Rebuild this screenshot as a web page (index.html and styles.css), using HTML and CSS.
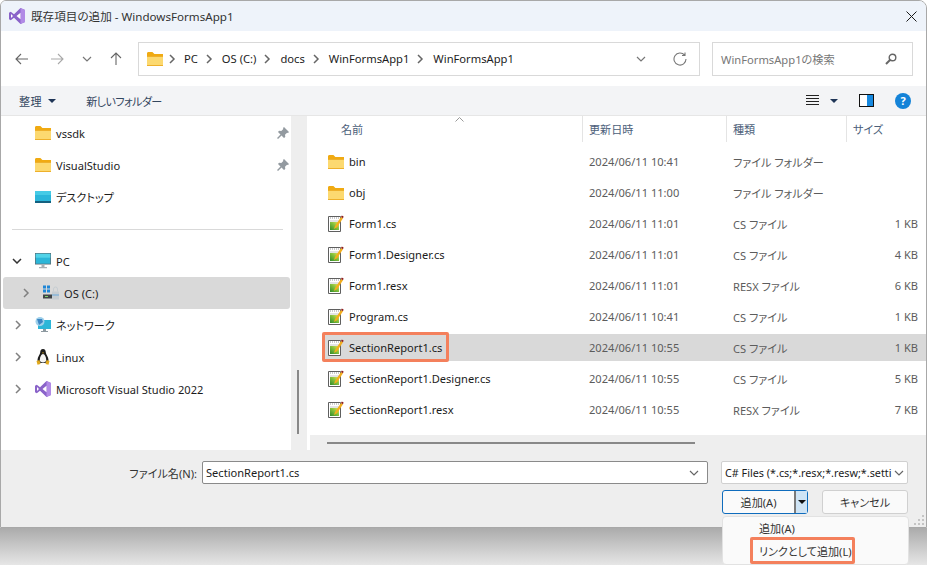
FILE: index.html
```html
<!DOCTYPE html>
<html lang="ja">

<head>
    <meta charset="UTF-8">
    <title>既存項目の追加 - WindowsFormsApp1</title>
    <link rel="stylesheet" href="styles.css">
</head>

<body>
    <!-- Shared icons -->
    <svg class="defs" width="0" height="0">
        <linearGradient id="g-cs" x1="0" y1="1" x2="1" y2="0">
            <stop offset="0" stop-color="#2f8a2a" />
            <stop offset=".55" stop-color="#86c13c" />
            <stop offset="1" stop-color="#e6e35a" />
        </linearGradient>
        <symbol id="i-folder" viewBox="0 0 16 14">
            <path d="M0 1.500C0 .7.6 0 1.400 0h4l2 2H16v3H0z" fill="#f0aa12" />
            <path d="M0 4h16v8.600c0 .8-.6 1.400-1.400 1.400H1.400C.6 14 0 13.400 0 12.600z" fill="#fcd970" />
            <path d="M0 4h16v1H0zM0 13h16v1H0z" fill="#eeb02b" />
        </symbol>
        <symbol id="i-cs" viewBox="0 0 16 17">
            <path d="M.5 1.500h12v15H.5z" fill="#fff" stroke="#5f5f5f" />
            <path d="M2 3h9" stroke="#999" stroke-dasharray="1 1" />
            <path d="M2 5h9v2H2z" fill="#e4e4e4" />
            <path d="M2 7h9v8H2z" fill="url(#g-cs)" />
            <path d="M6 14l1-3 6-9 2 1.300-6 9z" fill="#f3ae1d" />
            <path d="M13 2l.8-1.500L15.600 1.600 15 3.300z" fill="#8c1c1c" />
        </symbol>
        <symbol id="i-vs" viewBox="0 0 16 16">
            <path d="M11.500 0L16 2v12l-4.500 2L5 9.800 1.800 12.300 0 11.300V4.700l1.800-1L5 6.200z" fill="#8a63c9" />
            <path d="M11.500 0L16 2v12l-4.500 2z" fill="#b18ae6" />
            <path d="M11.500 4.700L7.500 8l4 3.300zM2 6v4l2-2z" fill="#fff" />
        </symbol>
        <symbol id="i-pc" viewBox="0 0 16 16">
            <path d="M0 0h16v11.500H0z" fill="#5b6b73" />
            <path d="M.7.700h14.600v10H.7z" fill="#2cb6d8" />
            <path d="M.7.700h14.600v4H.7z" fill="#52d3e8" />
            <path d="M6.500 11.500h3V14h-3zM4 14h8v1.200H4z" fill="#a9b1b5" />
        </symbol>
        <symbol id="i-desk" viewBox="0 0 16 12">
            <path d="M0 1c0-.6.4-1 1-1h14c.6 0 1 .4 1 1v9H0z" fill="#2bb6da" />
            <path d="M0 0h16v4H0z" fill="#46cbe6" />
            <path d="M0 10h16v2H0z" fill="#14607f" />
        </symbol>
        <symbol id="i-pin" viewBox="0 0 12 12">
            <path d="M7 0l5 5-1 1-1-.3L8 7.700 8.300 10 7 11 4.500 8.500 1 12 0 11l3.500-3.500L1 5l1-1.300L4.300 4 6.300 2 6 1z" fill="#939aa0" />
        </symbol>
        <symbol id="i-chev" viewBox="0 0 8 10">
            <path d="M2 1l4 4-4 4" fill="none" stroke="currentColor" stroke-width="1.500" />
        </symbol>
        <symbol id="i-down" viewBox="0 0 10 6">
            <path d="M1 1l4 4 4-4" fill="none" stroke="currentColor" stroke-width="1.200" />
        </symbol>
    </svg>

    <div class="window">
        <div class="titlebar">
            <svg class="title-icon"><use href="#i-vs" /></svg>
            <span class="title-text">既存項目の追加 - WindowsFormsApp1</span>
            <svg class="close" viewBox="0 0 11 11"><path d="M.5.500l10 10M10.500.500l-10 10" stroke="#1a1a1a" fill="none" /></svg>
        </div>

        <div class="addressrow">
            <div class="nav">
                <svg class="nav-icon" viewBox="0 0 14 12"><path d="M13 6H1M6 1L1 6l5 5" fill="none" stroke="#666" stroke-width="1.100" /></svg>
                <svg class="nav-icon off" viewBox="0 0 14 12"><path d="M1 6h12M8 1l5 5-5 5" fill="none" stroke="#a9a9a9" stroke-width="1.100" /></svg>
                <svg class="nav-small"><use href="#i-down" /></svg>
                <svg class="nav-icon up" viewBox="0 0 12 14"><path d="M6 13V1M1 6l5-5 5 5" fill="none" stroke="#666" stroke-width="1.100" /></svg>
            </div>
            <div class="address">
                <svg class="addr-folder"><use href="#i-folder" /></svg>
                <svg class="crumb-sep first"><use href="#i-chev" /></svg><span>PC</span>
                <svg class="crumb-sep"><use href="#i-chev" /></svg><span>OS (C:)</span>
                <svg class="crumb-sep"><use href="#i-chev" /></svg><span>docs</span>
                <svg class="crumb-sep"><use href="#i-chev" /></svg><span>WinFormsApp1</span>
                <svg class="crumb-sep"><use href="#i-chev" /></svg><span>WinFormsApp1</span>
                <svg class="addr-down"><use href="#i-down" /></svg>
                <svg class="addr-refresh" viewBox="0 0 14 14"><path d="M11.600 3.200A6 6 0 1 0 13 7M12 .5v3H9" fill="none" stroke="#777" stroke-width="1.100" /></svg>
            </div>
            <div class="search">
                <span>WinFormsApp1の検索</span>
                <svg class="search-icon" viewBox="0 0 12 12"><circle cx="7.500" cy="4.500" r="3.300" fill="none" stroke="#666" stroke-width="1.400" /><path d="M5 7l-4 4" stroke="#666" stroke-width="2" /></svg>
            </div>
        </div>

        <div class="toolbar">
            <span class="tool-org">整理</span>
            <span class="caret"></span>
            <span class="tool-new">新しいフォルダー</span>
            <svg class="view-icon" viewBox="0 0 13 11"><path d="M0 .5h13M0 3.500h13M0 6.500h13M0 9.500h13" stroke="#222" /></svg>
            <span class="caret view-caret"></span>
            <div class="pane-icon"><div class="pane-fill"></div></div>
            <div class="help">?</div>
        </div>

        <div class="content">
            <div class="tree">
                <ul class="tree-list">
                    <li class="tree-row"><svg class="t-icon"><use href="#i-folder" /></svg><span>vssdk</span><svg class="pin"><use href="#i-pin" /></svg></li>
                    <li class="tree-row"><svg class="t-icon"><use href="#i-folder" /></svg><span>VisualStudio</span><svg class="pin"><use href="#i-pin" /></svg></li>
                    <li class="tree-row"><svg class="t-icon"><use href="#i-desk" /></svg><span>デスクトップ</span></li>
                    <li class="tree-divider"></li>
                    <li class="tree-row"><svg class="twist open" viewBox="0 0 10 6"><path d="M1 1l4 4 4-4" fill="none" stroke="#333" stroke-width="1.500" /></svg><svg class="t-icon"><use href="#i-pc" /></svg><span>PC</span></li>
                    <li class="tree-row selected"><svg class="twist"><use href="#i-chev" /></svg><svg class="t-icon" viewBox="0 0 16 15">
                            <path d="M0 0h3v3H0zM4 0h3v3H4zM0 4h3v3H0zM4 4h3v3H4z" fill="#1f86d6" />
                            <path d="M0 9h12v4H0z" fill="#3f4448" />
                            <path d="M2 10.500h3v1H2z" fill="#7fd06a" />
                            <path d="M9 6h7v8H9z" fill="#c6cdd2" />
                            <path d="M9 9h7v1H9z" fill="#6aa8dc" />
                            <path d="M10.500 6V3.500a2 2 0 0 1 4 0V6" fill="none" stroke="#c6cdd2" />
                        </svg><span>OS (C:)</span></li>
                    <li class="tree-row"><svg class="twist"><use href="#i-chev" /></svg><svg class="t-icon" viewBox="0 0 16 16">
                            <path d="M3 3h13v9H3z" fill="#2cb6d8" />
                            <path d="M8 12h3v2H8zM6 14h7v1H6z" fill="#8e9aa1" />
                            <circle cx="5" cy="4.500" r="4.500" fill="#9fd0ea" />
                            <path d="M2 2h5l1 3-4 3z" fill="#3c86c4" />
                        </svg><span>ネットワーク</span></li>
                    <li class="tree-row"><svg class="twist"><use href="#i-chev" /></svg><svg class="t-icon" viewBox="0 0 16 16">
                            <path d="M8 0c2 0 2.800 1.600 2.800 3.500 0 2 2.700 4 2.700 7.500 0 1.500-1 3-5.500 3s-5.500-1.500-5.500-3c0-3.500 2.700-5.500 2.700-7.500C5.200 1.600 6 0 8 0z" fill="#1c1c1c" />
                            <path d="M8 5c1.500 0 3.200 3 3.200 6 0 1.500-1.200 2.500-3.200 2.500S4.800 12.500 4.800 11c0-3 1.700-6 3.200-6z" fill="#f4f4f4" />
                            <path d="M1.500 12l3-1 1 4-3 .8zM14.500 12l-3-1-1 4 3 .8zM7 3.500h2L8 4.800z" fill="#e0a81c" />
                        </svg><span>Linux</span></li>
                    <li class="tree-row"><svg class="twist"><use href="#i-chev" /></svg><svg class="t-icon"><use href="#i-vs" /></svg><span>Microsoft Visual Studio 2022</span></li>
                </ul>
            </div>
            <div class="tree-scroll"><div class="tree-thumb"></div></div>

            <div class="files">
                <div class="file-head">
                    <div class="head-cell head-name">名前<svg class="sort" viewBox="0 0 9 5"><path d="M.5 4.500l4-4 4 4" fill="none" stroke="#999" /></svg></div>
                    <div class="head-cell">更新日時</div>
                    <div class="head-cell">種類</div>
                    <div class="head-cell">サイズ</div>
                </div>
                <div class="file-list">
                    <div class="file-row"><div class="f-name"><svg class="f-icon folder"><use href="#i-folder" /></svg><span>bin</span></div><div class="f-date">2024/06/11 10:41</div><div class="f-type">ファイル フォルダー</div><div class="f-size"></div></div>
                    <div class="file-row"><div class="f-name"><svg class="f-icon folder"><use href="#i-folder" /></svg><span>obj</span></div><div class="f-date">2024/06/11 11:00</div><div class="f-type">ファイル フォルダー</div><div class="f-size"></div></div>
                    <div class="file-row"><div class="f-name"><svg class="f-icon"><use href="#i-cs" /></svg><span>Form1.cs</span></div><div class="f-date">2024/06/11 11:01</div><div class="f-type">CS ファイル</div><div class="f-size">1 KB</div></div>
                    <div class="file-row"><div class="f-name"><svg class="f-icon"><use href="#i-cs" /></svg><span>Form1.Designer.cs</span></div><div class="f-date">2024/06/11 11:01</div><div class="f-type">CS ファイル</div><div class="f-size">4 KB</div></div>
                    <div class="file-row"><div class="f-name"><svg class="f-icon"><use href="#i-cs" /></svg><span>Form1.resx</span></div><div class="f-date">2024/06/11 11:01</div><div class="f-type">RESX ファイル</div><div class="f-size">6 KB</div></div>
                    <div class="file-row"><div class="f-name"><svg class="f-icon"><use href="#i-cs" /></svg><span>Program.cs</span></div><div class="f-date">2024/06/11 10:41</div><div class="f-type">CS ファイル</div><div class="f-size">1 KB</div></div>
                    <div class="file-row active"><div class="f-name"><svg class="f-icon"><use href="#i-cs" /></svg><span>SectionReport1.cs</span><div class="mark mark-file"></div></div><div class="f-date">2024/06/11 10:55</div><div class="f-type">CS ファイル</div><div class="f-size">1 KB</div></div>
                    <div class="file-row"><div class="f-name"><svg class="f-icon"><use href="#i-cs" /></svg><span>SectionReport1.Designer.cs</span></div><div class="f-date">2024/06/11 10:55</div><div class="f-type">CS ファイル</div><div class="f-size">5 KB</div></div>
                    <div class="file-row"><div class="f-name"><svg class="f-icon"><use href="#i-cs" /></svg><span>SectionReport1.resx</span></div><div class="f-date">2024/06/11 10:55</div><div class="f-type">RESX ファイル</div><div class="f-size">7 KB</div></div>
                </div>
                <div class="h-scroll"><div class="h-thumb"></div></div>
            </div>
        </div>

        <div class="footer">
            <div class="name-line">
                <label class="name-label">ファイル名(N):</label>
                <div class="name-input"><span>SectionReport1.cs</span><svg class="input-down"><use href="#i-down" /></svg></div>
                <div class="type-select"><span>C# Files (*.cs;*.resx;*.resw;*.setti</span><svg class="input-down"><use href="#i-down" /></svg></div>
            </div>
            <div class="button-line">
                <div class="btn btn-add"><span class="btn-main">追加(A)</span><span class="btn-split"><span class="split-caret"></span></span></div>
                <div class="btn btn-cancel">キャンセル</div>
            </div>
            <svg class="grip" viewBox="0 0 11 11"><path d="M8 0h2v2H8zM4 4h2v2H4zM8 4h2v2H8zM0 8h2v2H0zM4 8h2v2H4zM8 8h2v2H8z" fill="#c4c4c4" /></svg>
        </div>
    </div>
    <div class="backdrop"></div>

    <!-- Split button menu -->
    <div class="menu">
        <div class="menu-item">追加(A)</div>
        <div class="menu-item"><span class="menu-text">リンクとして追加(L)</span></div>
    </div>
</body>

</html>
```

FILE: styles.css
```css
* {
    box-sizing: border-box;
}

html,
body {
    height: 100%;
    margin: 0;
    overflow: hidden;
}

body {
    position: relative;
    display: flex;
    flex-direction: column;
    font-family: "Noto Sans", "Noto Sans CJK JP", sans-serif;
    font-size: 11.1px;
    font-feature-settings: "palt";
    color: #1c1c1c;
    background: #fff;
}

svg {
    flex: none;
    display: block;
}

.defs {
    position: absolute;
}

.window {
    height: 528px;
    flex: none;
    display: flex;
    flex-direction: column;
    border: 1px solid #a8a8a8;
    border-radius: 6px 8px 0 0;
    overflow: hidden;
    background: #fff;
}

.backdrop {
    flex: 1;
    background: linear-gradient(#ababab, #e6e6e6);
}

/* title bar */
.titlebar {
    height: 30px;
    flex: none;
    display: flex;
    align-items: center;
    padding: 0 9px 0 8px;
    background: #eef3fa;
}

.title-icon {
    width: 16px;
    height: 16px;
}

.title-text {
    margin-left: 6px;
    font-size: 11.6px;
    color: #333;
}

.close {
    width: 11px;
    height: 11px;
    margin-left: auto;
}

/* address row */
.addressrow {
    height: 55px;
    flex: none;
    display: flex;
    align-items: center;
    padding-right: 13px;
}

.nav {
    width: 137px;
    flex: none;
    display: flex;
    align-items: center;
    padding-left: 14px;
}

.nav-icon {
    width: 14px;
    height: 12px;
}

.nav-icon.off {
    margin-left: 21px;
}

.nav-small {
    width: 10px;
    height: 6px;
    margin-left: 18px;
    color: #777;
}

.nav-icon.up {
    width: 12px;
    height: 14px;
    margin-left: 18px;
}

.address {
    width: 562px;
    height: 34px;
    display: flex;
    align-items: center;
    padding-left: 8px;
    border: 1px solid #d9d9d9;
    font-size: 11.2px;
}

.addr-folder {
    width: 16px;
    height: 14px;
}

.crumb-sep {
    width: 8px;
    height: 10px;
    margin: 0 9px 0 7px;
    color: #666;
}

.crumb-sep.first {
    margin: 0 8px 0 5px;
}

.addr-down {
    width: 10px;
    height: 6px;
    margin-left: auto;
    color: #777;
}

.addr-refresh {
    width: 14px;
    height: 14px;
    margin: 0 12px 0 27px;
}

.search {
    width: 201px;
    height: 34px;
    margin-left: 12px;
    display: flex;
    align-items: center;
    justify-content: space-between;
    padding: 0 15px 0 8px;
    border: 1px solid #d9d9d9;
    color: #777;
    font-size: 11.2px;
}

.search-icon {
    width: 12px;
    height: 12px;
}

/* toolbar */
.toolbar {
    height: 30px;
    flex: none;
    display: flex;
    align-items: center;
    padding: 0 15px 0 18px;
    background: #f3f4f6;
    color: #33475f;
    border-bottom: 1px solid #e6e6e6;
}

.caret {
    width: 0;
    height: 0;
    margin-left: 6px;
    border-left: 4px solid transparent;
    border-right: 4px solid transparent;
    border-top: 4px solid #1f3557;
}

.tool-org {
    letter-spacing: .5px;
}

.tool-new {
    margin-left: 30px;
    letter-spacing: -.6px;
}

.view-icon {
    width: 13px;
    height: 11px;
    margin-left: auto;
}

.view-caret {
    margin-left: 11px;
}

.pane-icon {
    width: 15px;
    height: 13px;
    margin-left: 21px;
    border: 1px solid #111;
    background: #fff;
}

.pane-fill {
    width: 6px;
    height: 100%;
    margin-left: auto;
    background: #1689e0;
}

.help {
    width: 16px;
    height: 16px;
    margin-left: 21px;
    border-radius: 50%;
    background: #1483d8;
    color: #fff;
    font-size: 11px;
    font-weight: 700;
    line-height: 16px;
    text-align: center;
}

/* main area */
.content {
    flex: 1;
    min-height: 0;
    display: flex;
}

.tree {
    width: 290px;
    flex: none;
    padding-left: 2px;
}

.tree-list {
    list-style: none;
    margin: 0;
    padding: 0;
}

.tree-row {
    height: 32px;
    display: flex;
    align-items: center;
    padding-left: 32px;
    position: relative;
}

.tree-row.selected {
    padding-left: 40px;
    background: #d9d9d9;
    border-radius: 3px;
    width: 287px;
}

.t-icon {
    width: 16px;
    height: 16px;
    margin-right: 5px;
}

.twist {
    position: absolute;
    left: 11px;
    top: 11px;
    width: 8px;
    height: 10px;
    color: #808080;
}

.selected .twist {
    left: 19px;
}

.twist.open {
    width: 10px;
    height: 6px;
    top: 13px;
    left: 9px;
}

.pin {
    width: 12px;
    height: 12px;
    position: absolute;
    left: 274px;
    top: 10px;
}

.tree-divider {
    height: 32px;
    position: relative;
}

.tree-divider::after {
    content: "";
    position: absolute;
    left: 9px;
    width: 271px;
    top: 16px;
    border-top: 1px solid #d9d9d9;
}

.tree-row:first-child {
    margin-top: 1px;
}

.tree-scroll {
    width: 16px;
    flex: none;
    background: #eee;
    padding: 254px 0 0 6px;
}

.tree-thumb {
    width: 2px;
    height: 64px;
    background: #888;
}

.files {
    flex: 1;
    min-width: 0;
    display: flex;
    flex-direction: column;
    padding-left: 3px;
}

.file-head,
.file-row {
    display: grid;
    grid-template-columns: 272px 144px 120px 79px;
}

.file-head {
    height: 26px;
    flex: none;
    color: #4c607a;
}

.head-cell {
    display: flex;
    align-items: center;
    padding-left: 6px;
    border-left: 1px solid #e4e4e4;
}

.head-name {
    position: relative;
    padding-left: 31px;
    border-left: none;
}

.sort {
    position: absolute;
    left: 145px;
    top: 1px;
    width: 9px;
    height: 5px;
}

.file-list {
    flex: 1;
    padding-top: 6px;
}

.file-row {
    height: 27px;
    margin-bottom: 4px;
    align-items: center;
}

.file-row.active {
    background: #d9d9d9;
    margin-left: 15px;
    grid-template-columns: 257px 144px 120px 79px;
}

.f-name {
    position: relative;
    display: flex;
    align-items: center;
    padding-left: 18px;
}

.active .f-name {
    padding-left: 3px;
}

.f-icon {
    width: 16px;
    height: 17px;
    margin-right: 5px;
}

.f-icon.folder {
    height: 14px;
}

.f-date,
.f-type {
    padding-left: 7px;
    color: #5c5c5c;
}

.f-size {
    padding-right: 7px;
    text-align: right;
    color: #5c5c5c;
}

/* orange annotation boxes */
.mark {
    position: absolute;
    border: 3px solid #f4805c;
    border-radius: 2px;
    pointer-events: none;
}

.mark-file {
    left: -3px;
    top: -7px;
    width: 127px;
    height: 30px;
}

.h-scroll {
    height: 15px;
    flex: none;
    background: #eee;
    padding: 7px 0 0 17px;
}

.h-thumb {
    width: 368px;
    height: 2px;
    background: #888;
}

/* footer */
.footer {
    height: 77px;
    flex: none;
    position: relative;
    background: #eee;
    padding-top: 11px;
}

.name-line {
    display: flex;
    align-items: center;
}

.name-label {
    width: 196px;
    text-align: right;
    color: #333;
}

.name-input {
    width: 506px;
    height: 23px;
    margin-left: 5px;
    display: flex;
    align-items: center;
    justify-content: space-between;
    padding: 0 8px 0 3px;
    background: #fff;
    border: 1px solid #8a8a8a;
    border-radius: 2px;
}

.input-down {
    width: 10px;
    height: 6px;
    color: #666;
}

.type-select {
    width: 187px;
    height: 23px;
    margin-left: 13px;
    display: flex;
    align-items: center;
    justify-content: space-between;
    padding: 0 3px 0 3px;
    background: #fff;
    border: 1px solid #d0d0d0;
    border-radius: 2px;
    font-size: 10.8px;
    white-space: nowrap;
}

.button-line {
    display: flex;
    justify-content: flex-end;
    margin: 6px 18px 0 0;
    gap: 14px;
}

.btn {
    width: 86px;
    height: 24px;
    display: flex;
    align-items: center;
    justify-content: center;
    background: #fafafa;
    border: 1px solid #d0d0d0;
    border-radius: 3px;
    color: #333;
}

.btn-add {
    justify-content: flex-start;
    border-color: #0f6cbd;
}

.btn-main {
    flex: 1;
    text-align: center;
}

.btn-split {
    width: 13px;
    height: 100%;
    display: flex;
    align-items: center;
    justify-content: center;
    border-left: 2px solid #7a7a7a;
    background: #cfe4f5;
}

.split-caret {
    width: 0;
    height: 0;
    border-left: 4px solid transparent;
    border-right: 4px solid transparent;
    border-top: 4px solid #111;
}

.grip {
    position: absolute;
    right: 1px;
    bottom: 1px;
    width: 11px;
    height: 11px;
}

/* popup under the add button */
.menu {
    position: absolute;
    left: 722px;
    top: 516px;
    width: 187px;
    height: 49px;
    background: #fafafa;
    border: 1px solid #e2e2e2;
    border-radius: 4px;
    color: #333;
}

.menu-item {
    height: 22px;
    padding-left: 36px;
    display: flex;
    align-items: center;
}

.menu-text {
    margin-left: -9px;
    padding: 3px 0 2px 6px;
    border: 3px solid #f4805c;
    border-radius: 2px;
}
```
